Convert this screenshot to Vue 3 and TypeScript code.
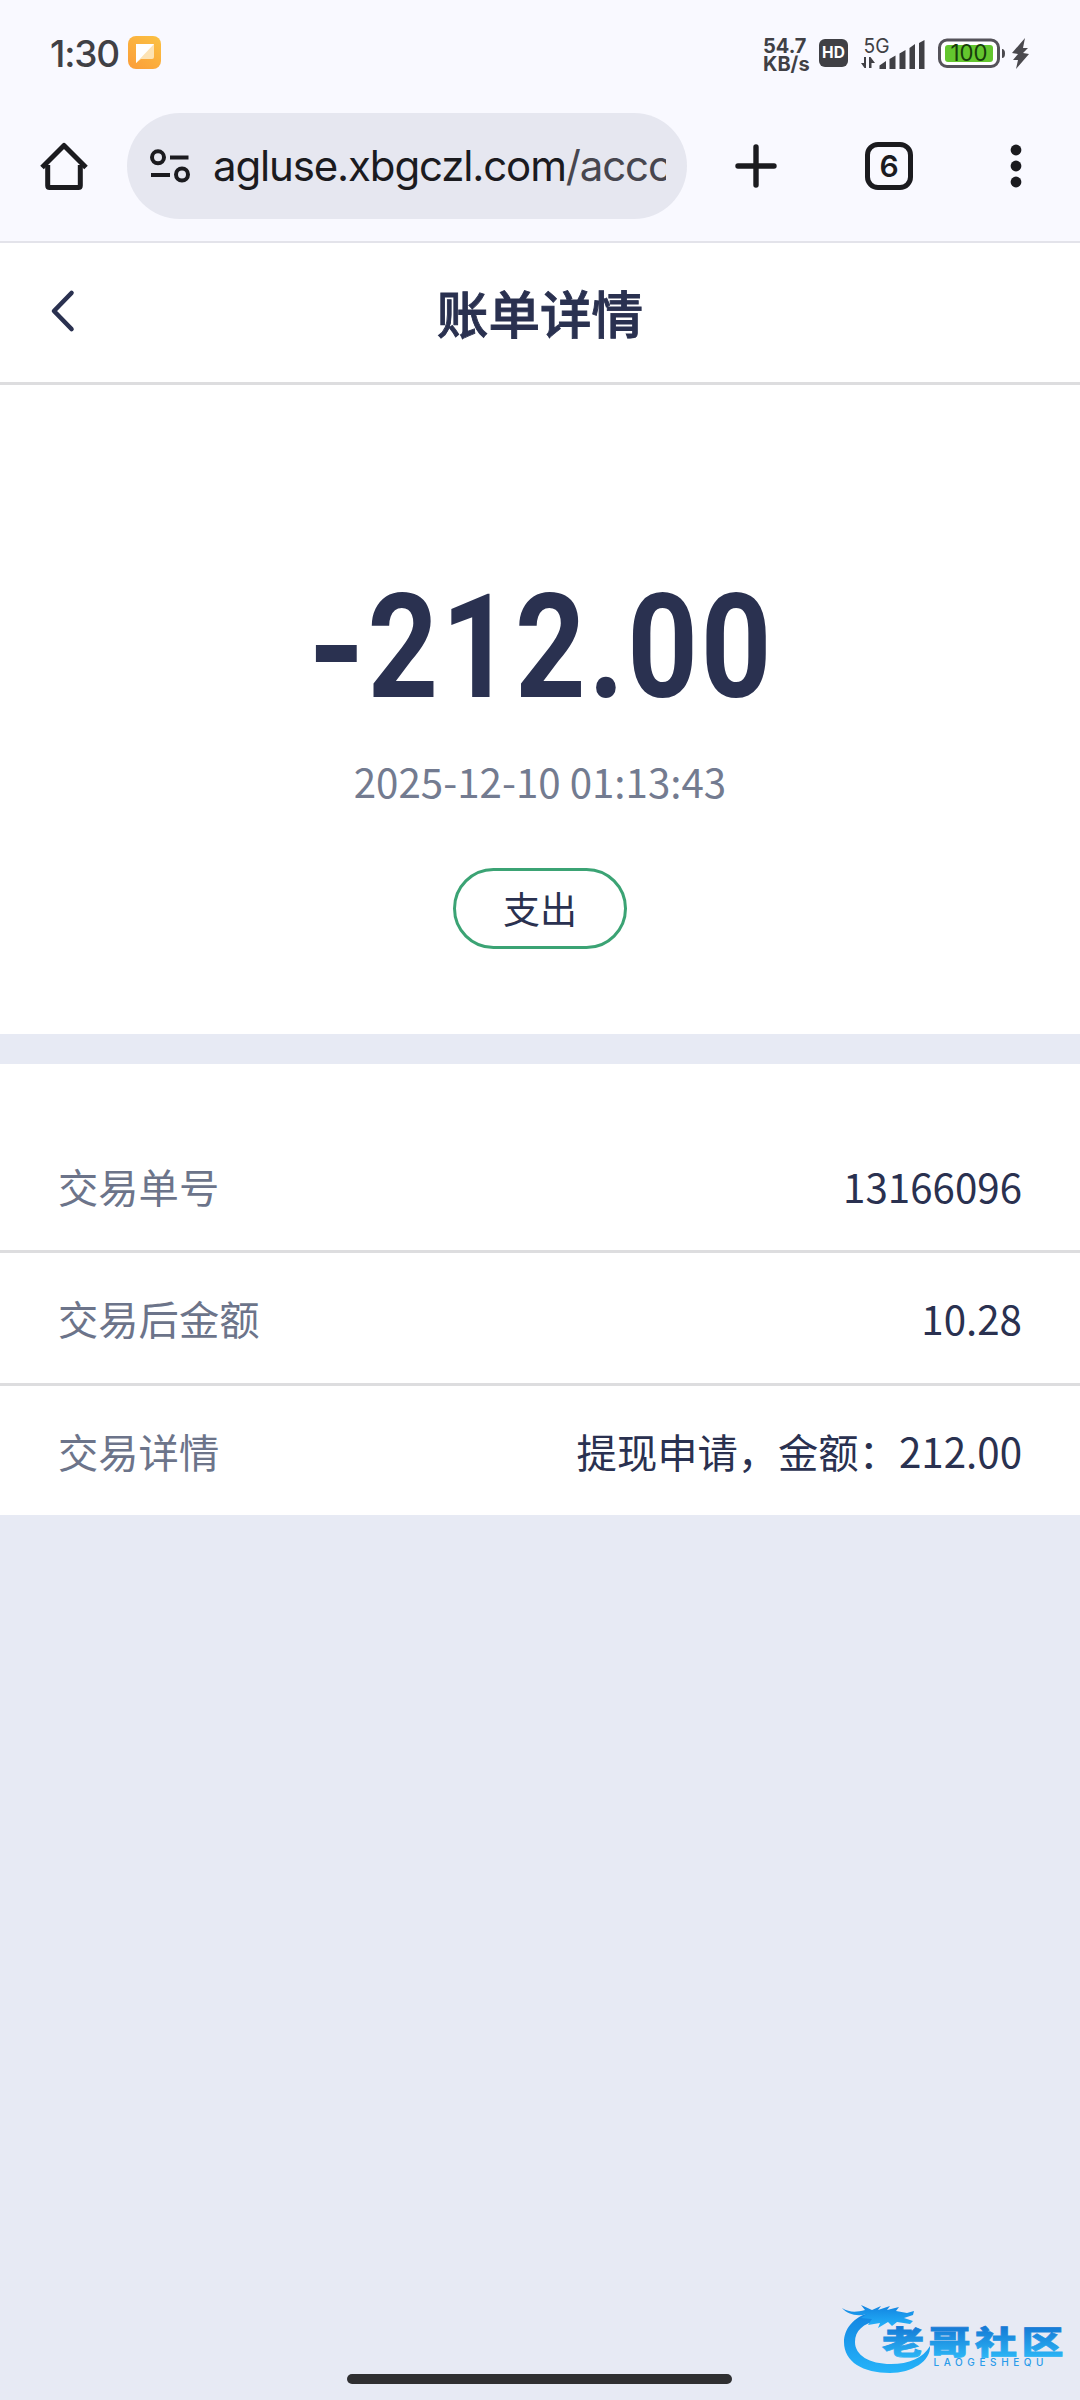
<script setup lang="ts">
interface DetailRow {
  label: string
  value: string
}

const rows: DetailRow[] = [
  { label: '交易单号', value: '13166096' },
  { label: '交易后金额', value: '10.28' },
  { label: '交易详情', value: '提现申请，金额：212.00' },
]
</script>

<template>
  <div class="screen">
    <header class="chrome">
      <div class="status">
        <span class="clock">1:30</span>
        <svg class="app-badge" width="33" height="33" viewBox="0 0 33 33">
          <defs>
            <linearGradient id="badge" x1="1" y1="0" x2="0.3" y2="1">
              <stop offset="0" stop-color="#fbc243" />
              <stop offset="1" stop-color="#fba13a" />
            </linearGradient>
          </defs>
          <rect width="33" height="33" rx="8" fill="url(#badge)" />
          <path d="M8 8H26V21Q26 23 24 23H13L8 27Z" fill="#fde3b4" />
          <path d="M8 8H26L8 27Z" fill="#fff" />
        </svg>
        <div class="status-right">
          <div class="speed"><span>54.7</span><span>KB/s</span></div>
          <span class="hd">HD</span>
          <svg class="signal" width="66" height="34" viewBox="0 0 66 34">
            <text x="2.5" y="16.500" font-size="20" textLength="26" lengthAdjust="spacingAndGlyphs">5G</text>
            <path d="M5 21V32H3.5L0 27H3V21ZM8 32V21H9.5L14 27H10.5V32Z" />
            <path d="M18.500 29.500L25 25V33H18.500ZM28.500 23L34.500 19.500V33H28.500ZM38.500 17.500L44.500 14V33H38.500ZM48.500 12L54 8V33H48.500ZM58 7L63.500 4V33H58Z" />
          </svg>
          <svg class="battery" width="94" height="34" viewBox="0 0 94 34">
            <rect x="1.500" y="4" width="59" height="26.500" rx="7.500" fill="#fff" stroke="#55535a" stroke-width="3" />
            <rect x="7" y="9" width="48" height="17" rx="3" fill="#63c62e" />
            <path d="M64 13Q67 13 67 17.500Q67 22 64 22Z" fill="#4a494e" />
            <text x="31" y="25.300" text-anchor="middle" font-size="22.500" textLength="37" lengthAdjust="spacingAndGlyphs" fill="#173c0c">100</text>
            <path d="M87 2L74 17L80 18L75 24L80 24L78 33L91 18L85 17L90 12L85 12Z" fill="#4a494e" />
          </svg>
        </div>
      </div>
      <div class="toolbar">
        <svg class="home" width="48" height="48" viewBox="0 0 48 48" fill="none" stroke="#1b1b1f" stroke-width="5">
          <path d="M7.700 23V43.500Q7.700 45.500 9.700 45.500H38.300Q40.300 45.500 40.300 43.500V23" />
          <path d="M2 25.500L24 3.500L46 25.500" stroke-linejoin="round" />
        </svg>
        <div class="omnibox">
          <svg class="tune" width="40" height="34" viewBox="0 0 40 34" fill="none" stroke="#1b1b1f" stroke-width="4">
            <circle cx="8" cy="8.300" r="6" />
            <path d="M20 8.500H38.500M1 26H20" />
            <circle cx="32" cy="25.500" r="6" />
          </svg>
          <div class="url">agluse.xbgczl.com<span>/accc</span></div>
        </div>
        <svg class="plus" width="42" height="44" viewBox="0 0 42 44" stroke="#1b1b1f" stroke-width="5.400" stroke-linecap="round">
          <path d="M21 3V41M3 22H39" />
        </svg>
        <span class="tabs">6</span>
        <svg class="more" width="12" height="44" viewBox="0 0 12 44" fill="#1b1b1f">
          <circle cx="6" cy="6" r="5.400" /><circle cx="6" cy="22" r="5.400" /><circle cx="6" cy="38" r="5.400" />
        </svg>
      </div>
    </header>

    <nav class="titlebar">
      <svg class="back" width="24" height="42" viewBox="0 0 24 42" fill="none" stroke="#2a3150" stroke-width="4.600" stroke-linecap="round" stroke-linejoin="round">
        <path d="M20.500 3L3 21L20.500 39" />
      </svg>
      <h1>账单详情</h1>
    </nav>

    <section class="summary">
      <svg class="amount" width="470" height="150" viewBox="0 0 470 150">
        <text transform="scale(0.85 1)" y="126.500" x="3 73.500 160.200 247 333.500 379 465.700"><tspan class="sign">-</tspan>212.00</text>
      </svg>
      <p class="time">2025-12-10 01:13:43</p>
      <span class="tag">支出</span>
    </section>

    <section class="details">
      <div v-for="row in rows" :key="row.label" class="row">
        <span class="label">{{ row.label }}</span>
        <span class="value">{{ row.value }}</span>
      </div>
    </section>

    <svg class="watermark" width="226" height="72" viewBox="0 0 226 72">
      <defs>
        <linearGradient id="wm" x1="0" y1="0" x2="0" y2="1">
          <stop offset="0" stop-color="#1283e0" />
          <stop offset="1" stop-color="#25b4fa" />
        </linearGradient>
        <linearGradient id="wmt" x1="0" y1="0" x2="0" y2="1">
          <stop offset="0.200" stop-color="#1578d4" />
          <stop offset="1" stop-color="#2fc0fb" />
        </linearGradient>
      </defs>
      <g fill="url(#wm)">
        <path d="M32 8C12 13 4 26 4 38C4 58 23 69 50 69C72 69 91 57 90 42C83 54 69 60 51 60C29 60 15 51 15 38C15 27 23 19 38 17Z" />
        <path d="M2 4C10 9 17 8 25 6L21 1L32 6L41 2L38 6L50 2L47 6L59 3L56 7L67 9L74 7L73 11L64 14L73 17L70 20L57 18L52 22L48 18L38 24L40 19L28 21L32 15L21 14L27 10C17 13 7 10 2 4Z" />
      </g>
      <text class="wm-cn" transform="translate(42 49.500) scale(1 0.760)" fill="url(#wmt)" stroke="url(#wmt)" stroke-width="1">老哥社区</text>
      <text class="wm-en" x="93.500" y="62" textLength="110">LAOGESHEQU</text>
    </svg>
    <div class="gesture"></div>
  </div>
</template>

<style>
body {
  margin: 0;
  background: #e7eaf4;
}
</style>

<style scoped>
.screen {
  position: relative;
  width: 1080px;
  height: 2400px;
  overflow: hidden;
  background: #e7eaf4;
  color: #2a3150;
  font-family: "Noto Sans CJK SC", sans-serif;
}
svg {
  overflow: visible;
}
.chrome {
  box-sizing: border-box;
  height: 243px;
  background: #f9f9ff;
  border-bottom: 2px solid #e3e3ea;
}
.status {
  display: flex;
  align-items: center;
  height: 105px;
  padding: 0 50px;
  color: #404045;
}
.clock {
  width: 78px;
  margin-top: 2px;
  font: 500 37px/45px Inter, sans-serif;
  letter-spacing: -1.200px;
}
.status-right {
  display: flex;
  align-items: center;
  margin-left: auto;
}
.speed {
  display: flex;
  flex-direction: column;
  width: 56px;
  font: 700 20px/18px Inter, sans-serif;
  margin-top: 4px;
}
.hd {
  width: 29px;
  height: 28px;
  margin-right: 13px;
  border-radius: 6px;
  background: #404045;
  color: #fff;
  font: 700 15.500px/28px Inter, sans-serif;
  text-align: center;
}
.signal {
  margin-right: 11px;
  fill: #404045;
  font-family: Inter, sans-serif;
}
.battery {
  margin-right: -2px;
  font-family: Inter, sans-serif;
}
.toolbar {
  display: flex;
  align-items: center;
  height: 122px;
  padding: 0 58px 0 40px;
}
.home {
  margin-right: 39px;
}
.omnibox {
  display: flex;
  align-items: center;
  box-sizing: border-box;
  width: 560px;
  height: 106px;
  padding: 0 21px 0 23px;
  border-radius: 53px;
  background: #e6e7f0;
}
.tune {
  margin-right: 23px;
}
.url {
  flex: 1;
  overflow: hidden;
  white-space: nowrap;
  color: #1b1b1f;
  font: 400 42px/60px Inter, sans-serif;
  letter-spacing: -1.150px;
}
.url span {
  color: #47464f;
}
.plus {
  margin-left: 48px;
}
.tabs {
  box-sizing: border-box;
  width: 48px;
  height: 48px;
  margin-left: 88px;
  border: 5px solid #1b1b1f;
  border-radius: 13px;
  color: #1b1b1f;
  font: 600 30px/39px Inter, sans-serif;
  text-align: center;
}
.more {
  margin-left: auto;
}
.titlebar {
  display: grid;
  grid-template-columns: 1fr auto 1fr;
  align-items: center;
  box-sizing: border-box;
  height: 142px;
  padding: 0 51px;
  background: #fff;
  border-bottom: 3px solid #dddddf;
}
.back {
  margin-top: -3px;
}
h1 {
  margin: -2px 0 0;
  font-size: 51.600px;
  font-weight: 500;
  line-height: 76px;
  -webkit-text-stroke: 0.900px #2a3150;
}
.summary {
  display: flex;
  flex-direction: column;
  align-items: center;
  height: 649px;
  background: #fff;
}
.amount {
  margin-top: 185px;
  fill: #2a3150;
  font-family: Roboto, sans-serif;
  font-size: 145px;
  font-weight: 700;
}
.sign {
  font-family: Inter, sans-serif;
}
.time {
  margin: 31px 0 0;
  color: #737b90;
  font-size: 40.300px;
  line-height: 60px;
}
.tag {
  box-sizing: border-box;
  width: 174px;
  height: 81px;
  margin-top: 57px;
  border: 3px solid #3ba374;
  border-radius: 41px;
  font-size: 37px;
  line-height: 74px;
  text-align: center;
}
.details {
  margin-top: 30px;
  padding-top: 56px;
  background: #fff;
}
.row {
  display: flex;
  align-items: center;
  justify-content: space-between;
  box-sizing: border-box;
  height: 133px;
  padding: 0 58px;
  border-bottom: 3px solid #dddddf;
  font-size: 40.300px;
  line-height: 60px;
}
.row:first-child {
  padding-top: 2px;
}
.row:last-child {
  height: 129px;
  border-bottom: 0;
}
.label {
  color: #6c748a;
}
.watermark {
  position: absolute;
  left: 840px;
  top: 2304px;
}
.wm-cn {
  font-size: 42px;
  font-weight: 900;
  letter-spacing: 4.500px;
}
.wm-en {
  fill: #2a9bea;
  font: 500 10px Inter, sans-serif;
}
.gesture {
  position: absolute;
  left: 347px;
  top: 2374px;
  width: 385px;
  height: 10px;
  border-radius: 5px;
  background: #2f2f31;
}
</style>
